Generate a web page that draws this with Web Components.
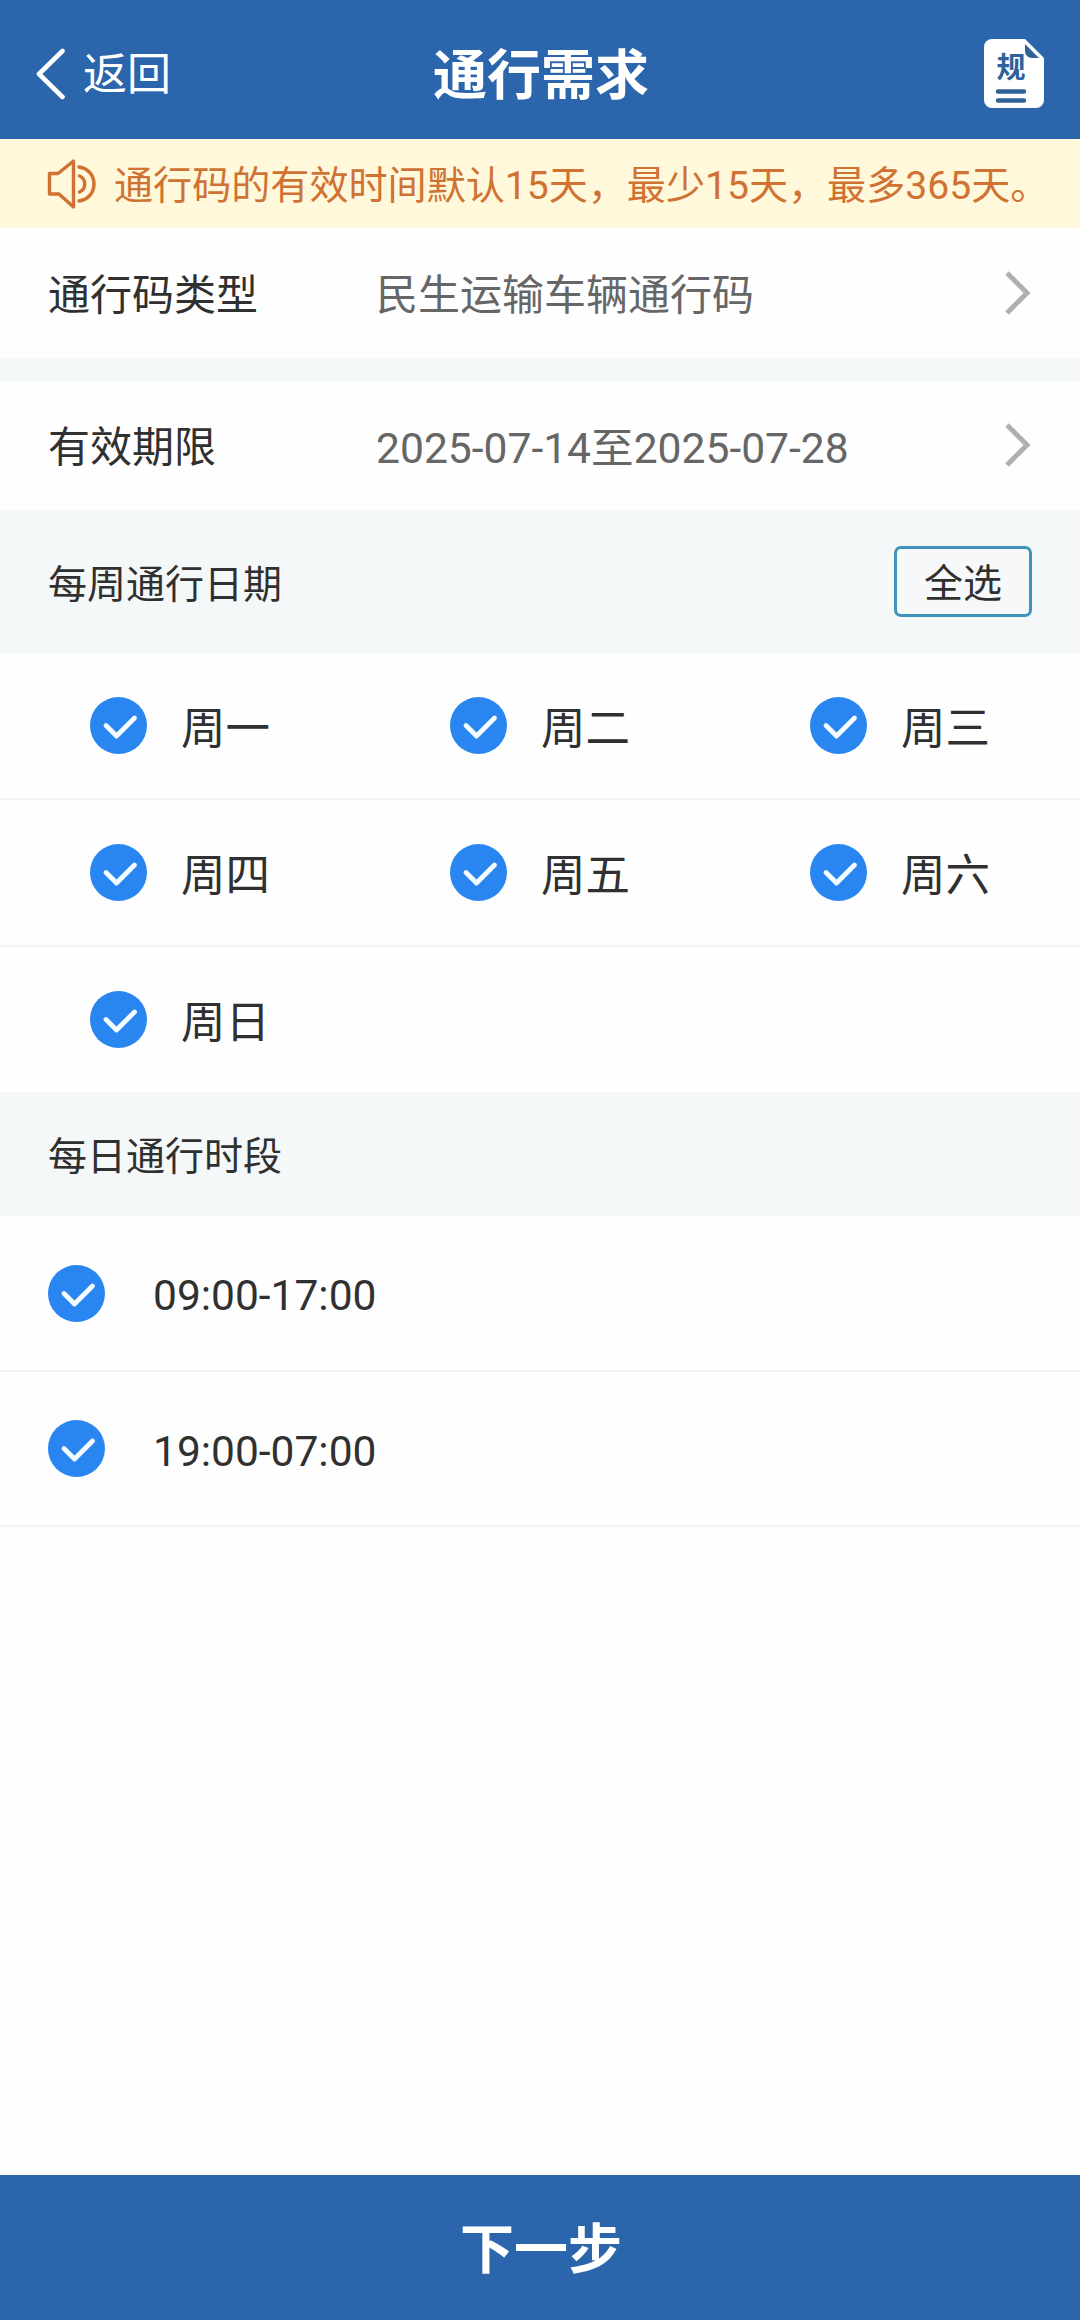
<!DOCTYPE html>
<html lang="zh-CN">
<head>
<meta charset="UTF-8">
<title>通行需求</title>
<style>
  body {
    margin: 0;
    background: #fefefe;
    font-family: Roboto, "Noto Sans CJK SC", sans-serif;
  }
</style>
</head>
<body>
<pass-page>
  <nav-bar slot="header" back="返回" badge="规">通行需求</nav-bar>
  <notice-bar>通行码的有效时间默认15天，最少15天，最多365天。</notice-bar>
  <cell-group>
    <link-cell label="通行码类型">民生运输车辆通行码</link-cell>
    <link-cell label="有效期限" style="--value-size: 42.600px">2025-07-14至2025-07-28</link-cell>
  </cell-group>
  <section-title style="--height: 143px">每周通行日期<outline-button slot="action">全选</outline-button></section-title>
  <week-grid days="周一,周二,周三,周四,周五,周六,周日"></week-grid>
  <section-title style="--height: 124px">每日通行时段</section-title>
  <time-row>09:00-17:00</time-row>
  <time-row>19:00-07:00</time-row>
  <submit-bar slot="footer">下一步</submit-bar>
</pass-page>

<script>
class PassPage extends HTMLElement {
  constructor() {
    super();
    this.attachShadow({ mode: "open" });
    this.shadowRoot.innerHTML = `
      <style>
        :host {
          display: flex;
          flex-direction: column;
          height: 2320px;
          color: #303030;
        }
        main {
          flex: 1;
          min-height: 0;
        }
      </style>
      <slot name="header"></slot>
      <main><slot></slot></main>
      <slot name="footer"></slot>
    `;
  }
}

class NavBar extends HTMLElement {
  constructor() {
    super();
    this.attachShadow({ mode: "open" });
  }

  connectedCallback() {
    this.shadowRoot.innerHTML = `
      <style>
        :host {
          display: grid;
          grid-template-columns: 1fr auto 1fr;
          align-items: center;
          box-sizing: border-box;
          height: 139px;
          padding: 8px 36px 0;
          background: #2b65ab;
          color: #fff;
        }
        svg { display: block; }
        .back {
          display: flex;
          align-items: center;
          gap: 18px;
          font-size: 44px;
          line-height: 56px;
        }
        .back span { padding-top: 3px; }
        .title {
          padding: 6px 0 0 2px;
          font-size: 54px;
          font-weight: 700;
          line-height: 64px;
        }
        .rules { justify-self: end; }
      </style>
      <div class="back">
        <svg width="29" height="52" viewBox="0 0 29 52" fill="none" stroke="#fff" stroke-width="4.6" stroke-linecap="round" stroke-linejoin="round">
          <path d="M26.5 3 3 26l23.500 23"/>
        </svg>
        <span>${this.getAttribute("back")}</span>
      </div>
      <div class="title"><slot></slot></div>
      <svg class="rules" width="60" height="69" viewBox="0 0 60 69">
        <path fill="#fff" d="M8 0h33l19 19v42a8 8 0 0 1-8 8H8a8 8 0 0 1-8-8V8a8 8 0 0 1 8-8z"/>
        <path fill="#2f6299" d="M41 5l14 14h-7a7 7 0 0 1-7-7z"/>
        <text x="27" y="39" text-anchor="middle" font-size="29" font-weight="700" fill="#2f6299">${this.getAttribute("badge")}</text>
        <path stroke="#2f6299" stroke-width="4.500" stroke-linecap="round" d="M14 52.500h26M14 61.500h26"/>
      </svg>
    `;
  }
}

class NoticeBar extends HTMLElement {
  constructor() {
    super();
    this.attachShadow({ mode: "open" });
    this.shadowRoot.innerHTML = `
      <style>
        :host {
          display: flex;
          align-items: center;
          gap: 18px;
          height: 89px;
          padding-left: 47px;
          background: #fff8da;
          color: #cf7233;
          font-size: 39.100px;
          line-height: 50px;
          white-space: nowrap;
        }
        svg { flex: none; }
        .text { padding-top: 5px; }
      </style>
      <svg width="49" height="50" viewBox="0 0 49 50" fill="none" stroke="currentColor" stroke-width="3.400" stroke-linecap="round" stroke-linejoin="round">
        <path d="M2.500 14.500H11L26.500 2v46L12 35H2.500z"/>
        <path d="M32.500 17c7 3 7 13 0 16"/>
        <path d="M32 8c20 3 20 31 0 34"/>
      </svg>
      <span class="text"><slot></slot></span>
    `;
  }
}

class CellGroup extends HTMLElement {
  constructor() {
    super();
    this.attachShadow({ mode: "open" });
    this.shadowRoot.innerHTML = `
      <style>
        :host {
          display: flex;
          flex-direction: column;
          gap: 23px;
          background: #f4f8f8;
        }
      </style>
      <slot></slot>
    `;
  }
}

class LinkCell extends HTMLElement {
  constructor() {
    super();
    this.attachShadow({ mode: "open" });
  }

  connectedCallback() {
    this.shadowRoot.innerHTML = `
      <style>
        :host {
          display: flex;
          align-items: center;
          height: 129.500px;
          padding: 0 49px 0 48px;
          background: #fefefe;
          font-size: 42px;
          line-height: 54px;
        }
        .label { width: 328px; padding-top: 6px; }
        .value {
          flex: 1;
          padding-top: 6px;
          color: #666;
          font-size: var(--value-size, 42px);
        }
      </style>
      <span class="label">${this.getAttribute("label")}</span>
      <span class="value"><slot></slot></span>
      <svg width="26" height="44" viewBox="0 0 26 44" fill="none" stroke="#b0b0b0" stroke-width="5">
        <path d="M2 2l20 20L2 42"/>
      </svg>
    `;
  }
}

class SectionTitle extends HTMLElement {
  constructor() {
    super();
    this.attachShadow({ mode: "open" });
    this.shadowRoot.innerHTML = `
      <style>
        :host {
          display: flex;
          align-items: center;
          justify-content: space-between;
          height: var(--height);
          padding: 0 48px;
          background: #f4f8f9;
          font-size: 39px;
          line-height: 50px;
        }
        .text { padding-top: 6px; }
      </style>
      <span class="text"><slot></slot></span>
      <slot name="action"></slot>
    `;
  }
}

class OutlineButton extends HTMLElement {
  constructor() {
    super();
    this.attachShadow({ mode: "open" });
    this.shadowRoot.innerHTML = `
      <style>
        :host { display: block; }
        button {
          display: block;
          box-sizing: border-box;
          width: 138px;
          height: 71px;
          padding: 5px 0 0;
          border: 3px solid #3f93bd;
          border-radius: 7px;
          background: #f6f8fa;
          color: inherit;
          font: inherit;
        }
      </style>
      <button><slot></slot></button>
    `;
  }
}

class CheckDot extends HTMLElement {
  constructor() {
    super();
    this.attachShadow({ mode: "open" });
    this.shadowRoot.innerHTML = `
      <style>
        :host { display: block; flex: none; }
        svg { display: block; }
      </style>
      <svg width="57" height="57" viewBox="0 0 57 57" fill="none">
        <circle cx="28.500" cy="28.500" r="28.500" fill="#2986f0"/>
        <path d="M16 28.500l10.500 10.500 18-18" stroke="#f4fcff" stroke-width="4.800" stroke-linecap="round" stroke-linejoin="round"/>
      </svg>
    `;
  }
}

class WeekGrid extends HTMLElement {
  constructor() {
    super();
    this.attachShadow({ mode: "open" });
  }

  connectedCallback() {
    const days = this.getAttribute("days").split(",");
    // a row only gets its divider when another row follows
    const lastRow = Math.floor((days.length - 1) / 3);
    const cells = [];
    for (let i = 0; i < (lastRow + 1) * 3; i++) {
      const line = Math.floor(i / 3) < lastRow ? "day line" : "day";
      cells.push(
        days[i]
          ? `<div class="${line}"><check-dot></check-dot><span>${days[i]}</span></div>`
          : `<div class="${line}"></div>`,
      );
    }

    this.shadowRoot.innerHTML = `
      <style>
        :host {
          display: grid;
          grid-template-columns: repeat(3, 1fr);
          grid-template-rows: 147px 147px 145px;
          background: #fefefe;
          font-size: 44.500px;
          line-height: 56px;
        }
        .day {
          display: flex;
          align-items: center;
          gap: 34px;
          padding-left: 90px;
        }
        .line { border-bottom: 2px solid #f3f3f3; }
        span { padding-top: 6px; }
      </style>
      ${cells.join("")}
    `;
  }
}

class TimeRow extends HTMLElement {
  constructor() {
    super();
    this.attachShadow({ mode: "open" });
    this.shadowRoot.innerHTML = `
      <style>
        :host {
          display: flex;
          align-items: center;
          gap: 48px;
          box-sizing: border-box;
          height: 155.500px;
          padding: 1px 0 0 48px;
          border-bottom: 2px solid #f2f2f2;
          background: #fefefe;
          font-size: 42.500px;
          line-height: 54px;
        }
        .text { padding-top: 6px; }
      </style>
      <check-dot></check-dot>
      <span class="text"><slot></slot></span>
    `;
  }
}

class SubmitBar extends HTMLElement {
  constructor() {
    super();
    this.attachShadow({ mode: "open" });
    this.shadowRoot.innerHTML = `
      <style>
        :host {
          display: flex;
          align-items: center;
          justify-content: center;
          box-sizing: border-box;
          height: 145px;
          padding: 7px 0 0 2px;
          background: #2b65ab;
          color: #fff;
          font-size: 54px;
          font-weight: 700;
          line-height: 64px;
        }
      </style>
      <slot></slot>
    `;
  }
}

customElements.define("check-dot", CheckDot);
customElements.define("nav-bar", NavBar);
customElements.define("notice-bar", NoticeBar);
customElements.define("cell-group", CellGroup);
customElements.define("link-cell", LinkCell);
customElements.define("section-title", SectionTitle);
customElements.define("outline-button", OutlineButton);
customElements.define("week-grid", WeekGrid);
customElements.define("time-row", TimeRow);
customElements.define("submit-bar", SubmitBar);
customElements.define("pass-page", PassPage);
</script>
</body>
</html>
